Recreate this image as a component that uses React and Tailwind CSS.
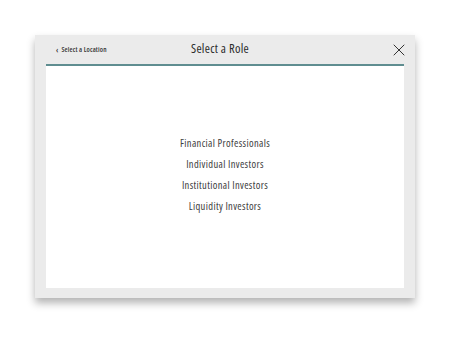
import { X } from "lucide-react";

const roles = [
  "Financial Professionals",
  "Individual Investors",
  "Institutional Investors",
  "Liquidity Investors",
];

export default function App() {
  return (
    <div
      className="w-[450px] h-[360px] bg-white pt-[35px] pl-[35px] font-stretch-condensed"
      style={{ fontFamily: '"Open Sans", "Noto Sans", sans-serif' }}
    >
      {/* Modal */}
      <div className="w-[380px] h-[263px] bg-[#ebebeb] px-[11px] pb-[10px] flex flex-col shadow-[0_5px_8px_rgba(0,0,0,0.3)]">
        {/* Header */}
        <div className="h-[29px] flex items-center relative">
          <button className="flex items-center gap-[3px] pl-[10px] pt-[1px] text-[7px] tracking-[0.15px] font-semibold text-[#333]">
            <span className="text-[8px] leading-none">‹</span>
            Select a Location
          </button>
          <h2 className="absolute left-0 right-[10px] text-center text-[12.5px] tracking-[0.3px] text-[#2a2a2a] pointer-events-none">
            Select a Role
          </h2>
          <button className="ml-auto mr-[-5px] text-[#333]">
            <X size={20} strokeWidth={1.2} />
          </button>
        </div>
        <div className="h-[2px] bg-[#5f8d90]" />
        {/* Body */}
        <div className="flex-1 bg-white flex flex-col items-center pt-[70px] gap-[6px]">
          {roles.map((r) => (
            <a key={r} className="text-[10.5px] tracking-[0.35px] leading-[15px] text-[#3d3d3d]">
              {r}
            </a>
          ))}
        </div>
      </div>
    </div>
  );
}
